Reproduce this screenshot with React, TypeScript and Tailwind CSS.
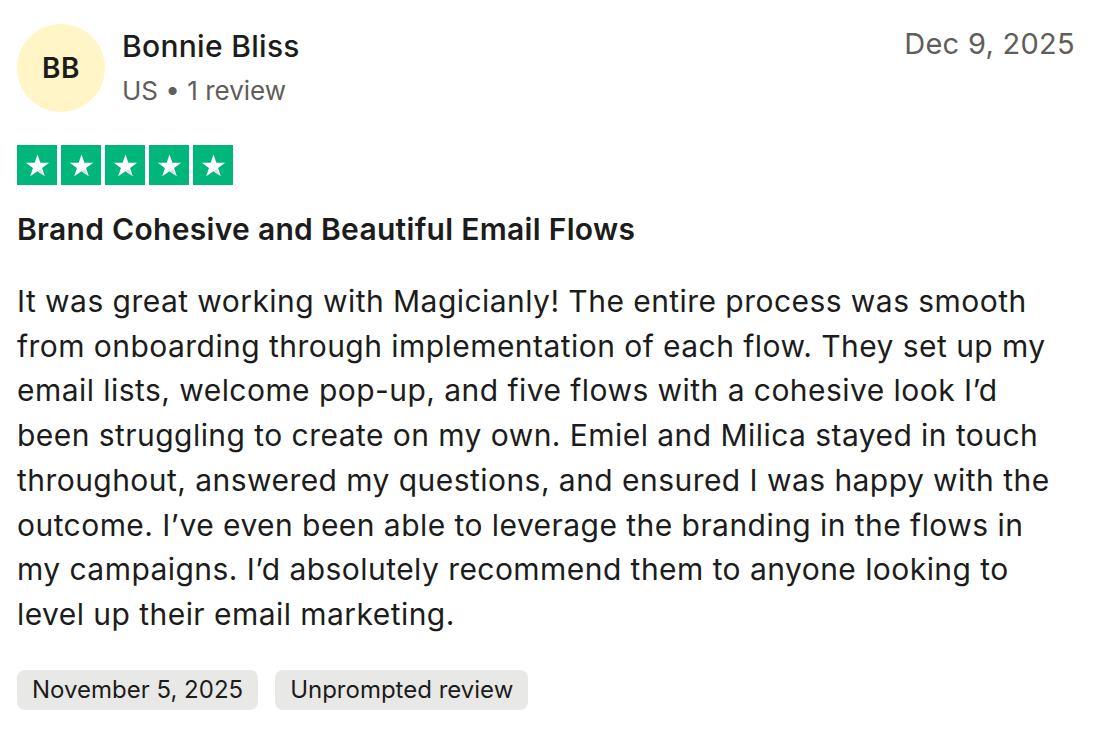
import React from "react";

function Star() {
  return (
    <div className="flex h-10 w-10 items-center justify-center bg-[#00b67a]">
      <svg viewBox="0 0 24 24" className="h-[27px] w-[27px]">
        <path
          d="M12 2.2l2.55 7.35H22.4l-6.35 4.6 2.45 7.45L12 17l-6.5 4.6 2.45-7.45-6.35-4.6h7.85z"
          fill="#ffffff"
        />
        <path d="M15.2 15.3L12 17l5.1 3.6-1.3-4.3z" fill="#dcdce6" />
      </svg>
    </div>
  );
}

export default function App() {
  return (
    <div className="min-h-screen bg-white text-[#1c1c1c] font-['Inter',sans-serif]">
      <div className="w-[1075px] pl-[17px] pt-6">
        <div className="flex items-start justify-between">
          <div className="flex items-center gap-[17px]">
            <div className="flex h-[88px] w-[88px] items-center justify-center rounded-full bg-[#fff5c6] text-[28px] font-semibold tracking-[0.02em]">
              BB
            </div>
            <div className="flex flex-col gap-[9px]">
              <div className="text-[30px] font-medium leading-[36px] tracking-[0.01em]">Bonnie Bliss</div>
              <div className="text-[26px] leading-[36px] text-[#5f5e5a]">US • 1 review</div>
            </div>
          </div>
          <div className="mt-[2px] text-[29px] leading-[36px] text-[#5f5e5a] tracking-[0.01em]">Dec 9, 2025</div>
        </div>

        <div className="mt-[33px] flex gap-1">
          <Star />
          <Star />
          <Star />
          <Star />
          <Star />
        </div>

        <h2 className="mt-[24px] text-[30px] font-semibold leading-[40px] tracking-[0.01em]">
          Brand Cohesive and Beautiful Email Flows
        </h2>

        <p className="mt-[30px] pr-[10px] text-[30px] leading-[44.7px] tracking-[0.015em]">
          It was great working with Magicianly! The entire process was smooth from onboarding through
          implementation of each flow. They set up my email lists, welcome pop-up, and five flows with a
          cohesive look I’d been struggling to create on my own. Emiel and Milica stayed in touch
          throughout, answered my questions, and ensured I was happy with the outcome. I’ve even been able
          to leverage the branding in the flows in my campaigns. I’d absolutely recommend them to anyone
          looking to level up their email marketing.
        </p>

        <div className="mt-[33px] flex gap-[17px]">
          <span className="rounded-lg bg-[#e8e8e6] px-[15px] text-[24px] leading-10">November 5, 2025</span>
          <span className="rounded-lg bg-[#e8e8e6] px-[15px] text-[24px] leading-10">Unprompted review</span>
        </div>
      </div>
    </div>
  );
}
